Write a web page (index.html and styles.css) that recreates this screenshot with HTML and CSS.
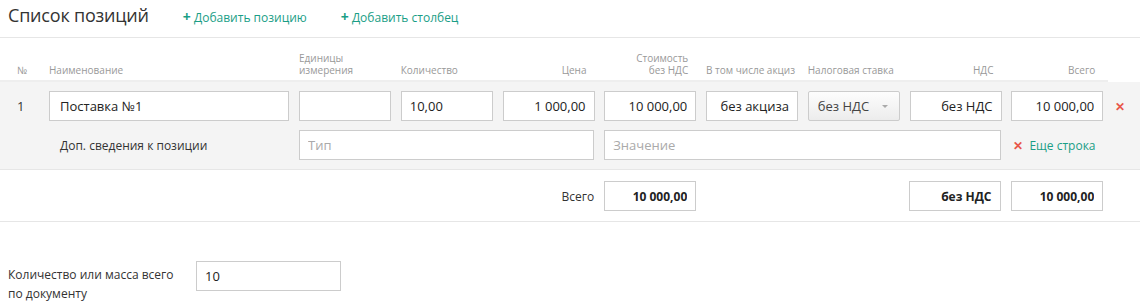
FILE: index.html
```html
<!DOCTYPE html>
<html lang="ru">
<head>
  <meta charset="UTF-8" />
  <title>Список позиций</title>
  <link rel="stylesheet" href="styles.css">
</head>
<body>

  <!-- Header -->
  <div class="head">
    <h1>Список позиций</h1>
    <a class="add-link" href="#"><span class="plus">+</span> Добавить позицию</a>
    <a class="add-link" href="#"><span class="plus">+</span> Добавить столбец</a>
  </div>

  <!-- Column titles -->
  <div class="grid titles">
    <div>№</div>
    <div>Наименование</div>
    <div>Единицы<br>измерения</div>
    <div>Количество</div>
    <div class="right">Цена</div>
    <div class="right">Стоимость<br>без НДС</div>
    <div>В том числе акциз</div>
    <div>Налоговая ставка</div>
    <div class="right">НДС</div>
    <div class="right">Всего</div>
  </div>

  <!-- Positions -->
  <div class="positions">
    <div class="grid row">
      <div class="num">1</div>
      <input class="field name" type="text" value="Поставка №1">
      <input class="field" type="text" value="">
      <input class="field" type="text" value="10,00">
      <input class="field right" type="text" value="1 000,00">
      <input class="field right" type="text" value="10 000,00">
      <input class="field right" type="text" value="без акциза">
      <div class="select">без НДС <span class="caret"></span></div>
      <input class="field right" type="text" value="без НДС">
      <input class="field right" type="text" value="10 000,00">
      <span class="remove">✕</span>
    </div>
    <div class="grid row extra">
      <div class="extra-label">Доп. сведения к позиции</div>
      <input class="field type" type="text" placeholder="Тип">
      <input class="field value" type="text" placeholder="Значение">
      <div class="more"><span class="remove">✕</span> <a href="#">Еще строка</a></div>
    </div>
  </div>

  <!-- Totals -->
  <div class="grid totals">
    <div class="total-label">Всего</div>
    <input class="field right bold c6" type="text" value="10 000,00">
    <input class="field right bold c9" type="text" value="без НДС">
    <input class="field right bold c10" type="text" value="10 000,00">
  </div>

  <div class="doc-qty">
    <label for="qty">Количество или масса всего по документу</label>
    <input class="field" id="qty" type="text" value="10">
  </div>

</body>
</html>
```

FILE: styles.css
```css
body {
  margin: 0;
  font-family: "Open Sans", Arial, sans-serif;
  font-size: 12px;
  color: #333;
  background: #fff;
}

a {
  text-decoration: none;
  color: #1a9e86;
}

.head {
  display: flex;
  align-items: baseline;
  height: 38px;
  padding-left: 8px;
  border-bottom: 1px solid #e6e6e6;
  box-sizing: border-box;
}

h1 {
  margin: 0;
  padding-top: 3px;
  font-size: 18px;
  font-weight: normal;
  color: #333;
  letter-spacing: -0.2px;
  margin-right: 34px;
}

.add-link {
  font-size: 12px;
  margin-right: 34px;
}

.plus {
  font-weight: bold;
  font-size: 14px;
}

.grid {
  display: grid;
  grid-template-columns: 41px 250px repeat(8, 101.75px) 1fr;
  padding-left: 8px;
}

.titles {
  margin-top: 14px;
  width: 1100px;
  align-items: end;
  font-size: 10px;
  color: #999;
  line-height: 12px;
  padding-bottom: 4px;
  border-bottom: 2px solid #eee;
}

.titles > div {
  width: 92px;
  box-sizing: border-box;
}

.titles > div.right {
  padding-right: 8px;
}

.titles > div:first-child {
  padding-left: 9px;
  width: auto;
}

.right {
  text-align: right;
}

.positions {
  background: #f4f4f4;
  border-bottom: 1px solid #e6e6e6;
  padding: 9px 0 9px;
}

.row {
  align-items: center;
}

.row + .row {
  margin-top: 9px;
}

.num {
  padding-left: 9px;
  font-size: 13px;
}

.field {
  box-sizing: border-box;
  width: 92px;
  height: 30px;
  border: 1px solid #ccc;
  background: #fff;
  padding: 0 8px;
  font-family: "Open Sans", Arial, sans-serif;
  font-size: 13px;
  color: #222;
  outline: none;
}

.field::placeholder {
  color: #aaa;
}

.field.name {
  width: 240px;
  padding-left: 10px;
}

.select {
  box-sizing: border-box;
  width: 92px;
  height: 30px;
  border: 1px solid #ccc;
  border-radius: 2px;
  background: linear-gradient(#fdfdfd, #ececec);
  padding: 0 9px;
  font-size: 13px;
  color: #444;
  display: flex;
  align-items: center;
  justify-content: space-between;
}

.caret {
  border-left: 3px solid transparent;
  border-right: 3px solid transparent;
  border-top: 3px solid #aaa;
  margin-right: 2px;
}

.remove {
  color: #e8574a;
  font-weight: bold;
  font-size: 12px;
  padding-left: 2px;
}

.extra-label {
  grid-column: 1 / 3;
  padding-left: 52px;
  font-size: 12px;
}

.field.type {
  grid-column: 3 / 6;
  width: 295px;
}

.field.value {
  grid-column: 6 / 10;
  width: 397px;
}

.more {
  grid-column: 10 / 12;
  font-size: 12px;
}

.more .remove {
  padding-left: 2px;
  margin-right: 3px;
}

.totals {
  align-items: center;
  padding-top: 11px;
  padding-bottom: 10px;
  border-bottom: 1px solid #e6e6e6;
}

.total-label {
  grid-column: 5 / 6;
  justify-self: end;
  padding-right: 10px;
  font-size: 12px;
}

.bold {
  font-weight: bold;
  font-size: 12px;
}

.c6 { grid-column: 6; }
.c9 { grid-column: 9; margin-left: -1px; }
.c10 { grid-column: 10; }

.doc-qty {
  display: flex;
  align-items: flex-start;
  margin-top: 39px;
  padding-left: 8px;
}

.doc-qty label {
  width: 170px;
  margin-top: 4px;
  line-height: 19px;
  font-size: 12px;
  margin-right: 18px;
}

.doc-qty .field {
  width: 145px;
  height: 30px;
}
```
